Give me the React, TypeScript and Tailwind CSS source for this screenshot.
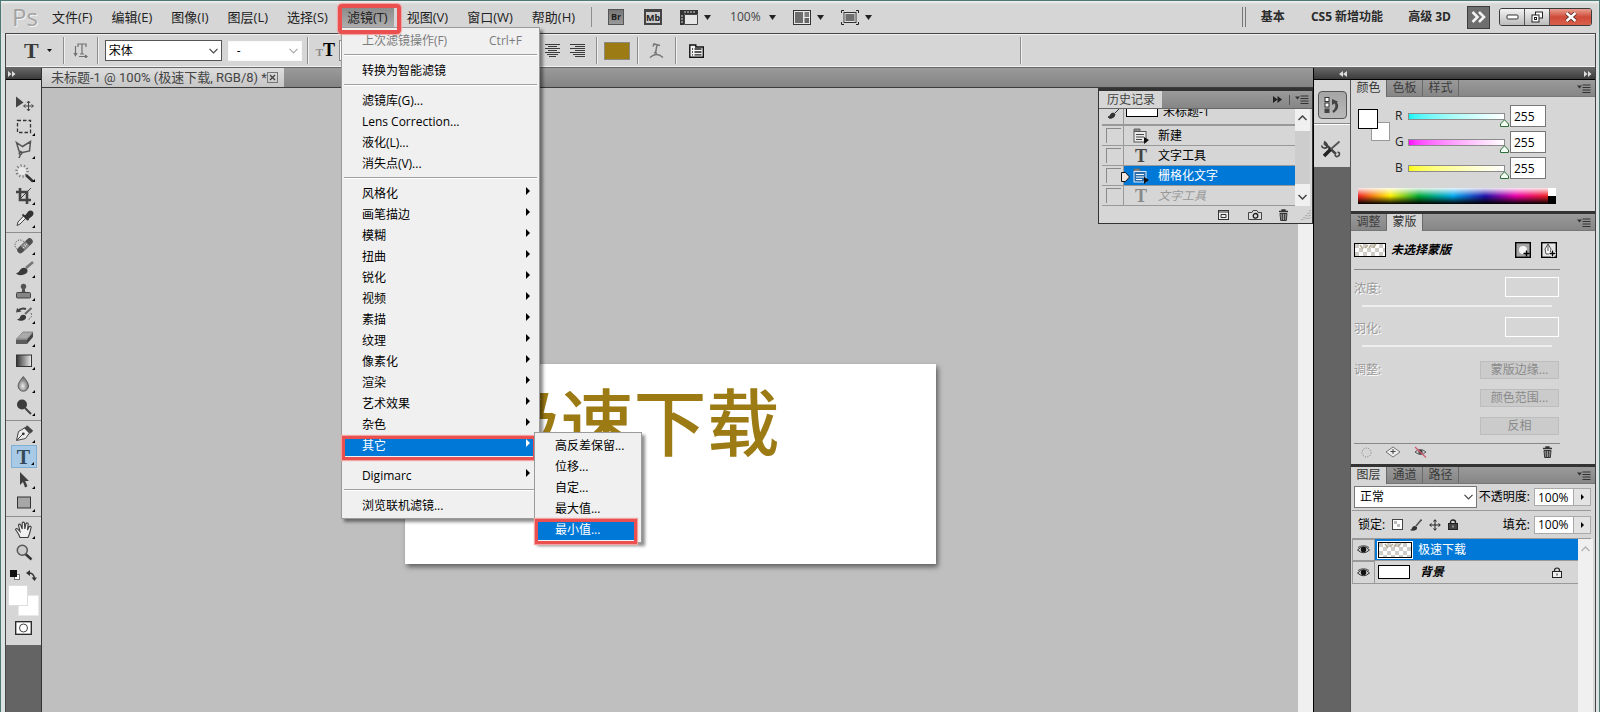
import { ReactNode, useState } from 'react';

const FONT = "font-['Open_Sans','Noto_Sans_CJK_SC',sans-serif]";

const MENUS_BEFORE = ['文件(F)', '编辑(E)', '图像(I)', '图层(L)', '选择(S)'];
const MENUS_AFTER = ['视图(V)', '窗口(W)', '帮助(H)'];

type Entry = { label?: string; shortcut?: string; disabled?: boolean; sub?: boolean; open?: boolean };

const FILTER_MENU: Entry[] = [
  { label: '上次滤镜操作(F)', shortcut: 'Ctrl+F', disabled: true },
  {},
  { label: '转换为智能滤镜' },
  {},
  { label: '滤镜库(G)...' },
  { label: 'Lens Correction...' },
  { label: '液化(L)...' },
  { label: '消失点(V)...' },
  {},
  { label: '风格化', sub: true },
  { label: '画笔描边', sub: true },
  { label: '模糊', sub: true },
  { label: '扭曲', sub: true },
  { label: '锐化', sub: true },
  { label: '视频', sub: true },
  { label: '素描', sub: true },
  { label: '纹理', sub: true },
  { label: '像素化', sub: true },
  { label: '渲染', sub: true },
  { label: '艺术效果', sub: true },
  { label: '杂色', sub: true },
  { label: '其它', sub: true, open: true },
  {},
  { label: 'Digimarc', sub: true },
  {},
  { label: '浏览联机滤镜...' }
];

const OTHER_MENU = ['高反差保留...', '位移...', '自定...', '最大值...', '最小值...'];

function Svg({ w, h, className, children }: { w: number; h: number; className?: string; children: ReactNode }) {
  return (
    <svg width={w} height={h} viewBox={`0 0 ${w} ${h}`} fill="none" className={className ?? 'shrink-0'} aria-hidden="true">
      {children}
    </svg>
  );
}

function DownArrow() {
  return (
    <Svg w={7} h={5}>
      <path d="M0 0h7L3.5 5z" fill="#222" />
    </Svg>
  );
}

function Chevron({ color = '#444' }: { color?: string }) {
  return (
    <Svg w={9} h={6} className="pointer-events-none absolute top-1/2 right-1 -translate-y-1/2">
      <path d="M.5.8l4 4 4-4" stroke={color} strokeWidth="1.2" />
    </Svg>
  );
}

function Grip({ className }: { className: string }) {
  return <span className={`block bg-[radial-gradient(#8a8a8a_35%,transparent_40%)] bg-[length:2px_2px] ${className}`} />;
}

function Separator() {
  return <span className="h-[27px] w-px shrink-0 bg-[#8e8e8e] shadow-[1px_0_#efefef]" />;
}

/* ---------- menu bar ---------- */

function FilterMenu() {
  return (
    <ul className="absolute top-[19px] left-0 z-30 w-[199px] border border-[#9b9b9b] bg-[#f0f0f0] py-0.5 text-xs text-black shadow-[3px_3px_3px_rgba(0,0,0,0.45)]">
      {FILTER_MENU.map((item, index) =>
        item.label ? (
          <li key={item.label} className="relative mx-0.5">
            <button
              type="button"
              disabled={item.disabled}
              className={`flex h-[21px] w-full items-center pt-0.5 pr-[15px] pl-[18px] text-left ${
                item.open ? 'bg-[#0078d7] text-white' : item.disabled ? 'text-[#7c7c7c]' : ''
              }`}
            >
              <span className="flex-1">{item.label}</span>
              {item.shortcut && <span>{item.shortcut}</span>}
              {item.sub && (
                <Svg w={4} h={8} className="-mt-1.5 -mr-2">
                  <path d="M0 0l4 4-4 4z" fill={item.open ? '#fff' : '#000'} />
                </Svg>
              )}
            </button>
            {item.open && (
              <>
                <span className="pointer-events-none absolute top-px -left-0.5 h-6 w-[194px] border-[3px] border-[#e9504f] shadow-[0_0_1px_1px_#f2a3a1]" />
                <OtherMenu />
              </>
            )}
          </li>
        ) : (
          <li key={index} role="separator" className="mx-0.5 h-[9px] pt-[3px]">
            <div className="h-px bg-[#a0a0a0] shadow-[0_1px_#fff]" />
          </li>
        )
      )}
    </ul>
  );
}

function OtherMenu() {
  return (
    <ul className="absolute -top-[3px] left-[190px] z-10 w-[108px] border border-[#9b9b9b] bg-[#f0f0f0] py-0.5 pr-1 pl-0.5 text-black shadow-[3px_3px_3px_rgba(0,0,0,0.45)]">
      {OTHER_MENU.map((label, index) => {
        const active = index === OTHER_MENU.length - 1;
        return (
          <li key={label} className="relative">
            <button
              type="button"
              className={`flex h-[21px] w-full items-center pt-0.5 pl-[18px] whitespace-nowrap ${active ? 'bg-[#0078d7] text-white' : ''}`}
            >
              {label}
            </button>
            {active && (
              <span className="pointer-events-none absolute top-0 -left-0.5 h-[25px] w-[102px] border-[3px] border-[#e9504f] shadow-[0_0_1px_1px_#f2a3a1]" />
            )}
          </li>
        );
      })}
    </ul>
  );
}

function MenuBar() {
  const item = 'h-[19px] px-1.5';
  return (
    <header className="flex h-8 shrink-0 items-center bg-[#d6d6d6] shadow-[inset_0_2px_2px_#efefef]">
      <span className="w-[45px] pl-[11px] font-['Open_Sans'] text-2xl leading-6 text-[#a3a3a3] [text-shadow:1px_1px_#f5f5f5]">Ps</span>
      <nav className="flex items-center gap-[7px] text-[13px] leading-[19px] text-[#222]">
        {MENUS_BEFORE.map((label) => (
          <button key={label} type="button" className={item}>{label}</button>
        ))}
        <div className="relative">
          <button type="button" className={`${item} bg-linear-to-b from-[#8c8c8c] to-[#adadad]`}>滤镜(T)</button>
          <FilterMenu />
          <span className="pointer-events-none absolute -top-1 -left-[3px] z-40 h-[30px] w-[63px] rounded-sm border-4 border-[#e9504f] shadow-[0_0_1px_1px_#f2a3a1]" />
        </div>
        {MENUS_AFTER.map((label) => (
          <button key={label} type="button" className={item}>{label}</button>
        ))}
      </nav>
      <span className="ml-2.5 h-5 w-px bg-[#8e8e8e]" />
      <div className="ml-4 flex items-center text-xs text-[#444]">
        <button type="button" aria-label="Bridge" className="h-4 w-4 border border-[#555] bg-linear-to-b from-[#777] to-[#999] text-center text-[9px] leading-[14px] font-bold text-[#1d1d1d]">Br</button>
        <button type="button" aria-label="Mini Bridge" className="ml-5 h-4 w-[18px] border-2 border-t-[3px] border-[#444] bg-[#ccc] text-center text-[9px] leading-[11px] font-bold text-[#222]">Mb</button>
        <button type="button" aria-label="显示额外内容" className="ml-[18px] flex items-center gap-1.5">
          <Svg w={18} h={15}>
            <rect width="18" height="4" fill="#333" />
            <rect width="4" height="15" fill="#333" />
            <path d="M5 1v2M8 1v2M11 1v2M14 1v2M1 6h2M1 9h2M1 12h2" stroke="#ddd" />
            <path d="M4.500 4.500h13v10h-13z" fill="#e6e6e6" stroke="#444" />
          </Svg>
          <DownArrow />
        </button>
        <button type="button" className="ml-[19px] flex items-center gap-2">100%<DownArrow /></button>
        <button type="button" aria-label="排列文档" className="ml-[17px] flex items-center gap-1.5">
          <Svg w={18} h={15}>
            <rect x=".5" y=".5" width="17" height="14" fill="#e8e8e8" stroke="#333" />
            <rect x="2" y="2" width="8" height="11" fill="#6d6d6d" />
            <rect x="11.500" y="2" width="4.500" height="5" fill="#7d7d7d" />
            <rect x="11.500" y="8" width="4.500" height="5" fill="#666" />
          </Svg>
          <DownArrow />
        </button>
        <button type="button" aria-label="屏幕模式" className="ml-[17px] flex items-center gap-1.5">
          <Svg w={18} h={15}>
            <path d="M.5 3V.5H3M15 .5h2.500V3M.5 12v2.500H3M15 14.500h2.500V12" stroke="#222" />
            <rect x="3" y="2.500" width="12" height="10" fill="#6f6f6f" stroke="#333" />
            <rect x="4" y="3.500" width="10" height="8" stroke="#ddd" />
          </Svg>
          <DownArrow />
        </button>
      </div>
      <div className="ml-auto flex items-center text-xs font-bold text-[#2a2a2a]">
        <span className="mr-[15px] h-5 w-1 border-x border-[#777]" />
        <button type="button" className="mr-[26px]">基本</button>
        <button type="button" className="mr-[25px]">CS5 新增功能</button>
        <button type="button">高级 3D</button>
        <button type="button" aria-label="更多工作区" className="mr-[9px] ml-4 flex h-[23px] w-[23px] items-center justify-center border border-[#3c3c3c] bg-[#6e6e6e]">
          <Svg w={15} h={12}>
            <path d="M1.500 1l5 5-5 5M8 1l5 5-5 5" stroke="#f3f3f3" strokeWidth="2.600" />
          </Svg>
        </button>
        <div className="mr-[7px] flex h-[18px] overflow-hidden rounded-[3px] border border-[#3b3b3b]">
          <button type="button" aria-label="最小化" className="flex w-[25px] items-center justify-center border-r border-[#555] bg-linear-to-b from-[#f3f3f3] to-[#bcbcbc]">
            <Svg w={13} h={6}><rect x="1" y="1" width="11" height="4" rx="1" fill="#fff" stroke="#333" /></Svg>
          </button>
          <button type="button" aria-label="还原" className="flex w-[25px] items-center justify-center border-r border-[#555] bg-linear-to-b from-[#f3f3f3] to-[#bcbcbc]">
            <Svg w={13} h={12}>
              <rect x="4.500" y="1" width="7" height="6" fill="#fff" stroke="#222" />
              <rect x="1" y="4" width="7" height="7" fill="#fff" stroke="#222" />
              <rect x="3.500" y="6.500" width="2" height="2" stroke="#222" />
            </Svg>
          </button>
          <button type="button" aria-label="关闭" className="flex w-[41px] items-center justify-center bg-linear-to-b from-[#e79d90] via-[#cf4a38] via-50% to-[#d9604c]">
            <Svg w={12} h={10}>
              <path d="M1.500 1l9 8M10.500 1l-9 8" stroke="#4a2620" strokeWidth="4" />
              <path d="M1.500 1l9 8M10.500 1l-9 8" stroke="#fff" strokeWidth="2.400" />
            </Svg>
          </button>
        </div>
      </div>
    </header>
  );
}

/* ---------- options bar ---------- */

function OptionsBar() {
  return (
    <section className="flex h-[35px] shrink-0 items-center border-y border-t-[#444] border-b-[#666] bg-[#d6d6d6] text-xs shadow-[inset_0_1px_#f2f2f2,inset_0_-1px_#f2f2f2]">
      <Grip className="ml-[3px] h-6 w-1" />
      <button type="button" aria-label="横排文字工具" className="ml-[11px] flex items-center gap-2">
        <span className="font-['Liberation_Serif'] text-[22px] leading-6 font-bold text-[#3a3a3a]">T</span>
        <Svg w={5} h={3}><path d="M0 0h5L2.500 3z" fill="#111" /></Svg>
      </button>
      <span className="w-[11px]" />
      <Separator />
      <button type="button" aria-label="切换文本取向" className="mx-[9px]">
        <Svg w={15} h={15}>
          <path d="M5 4V1h8v3M9 1v10M7 11h4M2.500 3v9M1 10l1.500 2.500L4 10M6 13.500h7M12 12l2 1.500-2 1.500" stroke="#707070" strokeWidth="1.200" />
        </Svg>
      </button>
      <Separator />
      <label className="relative ml-[7px]">
        <select aria-label="字体" className="h-[21px] w-[117px] appearance-none border border-[#555] bg-white pl-[3px] text-black">
          <option>宋体</option>
        </select>
        <Chevron />
      </label>
      <label className="relative ml-1.5">
        <select aria-label="字体样式" className="h-5 w-[74px] appearance-none border border-[#f8f8f8] bg-white pl-2 text-black">
          <option>-</option>
        </select>
        <Chevron color="#aaa" />
      </label>
      <span className="w-[5px]" />
      <Separator />
      <span className="ml-2 flex items-baseline font-['Liberation_Serif'] leading-6 font-bold">
        <span className="text-[11px] text-[#888]">T</span>
        <span className="text-lg leading-6 text-black">T</span>
      </span>
      <label className="relative ml-1">
        <select aria-label="字体大小" className="h-[21px] w-[80px] appearance-none border border-[#888] bg-white pl-1 text-black">
          <option>72 点</option>
        </select>
        <Chevron />
      </label>
      <label className="relative ml-2">
        <select aria-label="消除锯齿" className="h-[21px] w-[72px] appearance-none border border-[#888] bg-white pl-1 text-black">
          <option>锐利</option>
        </select>
        <Chevron />
      </label>
      <div className="ml-[21px] flex gap-2.5">
        <button type="button" aria-label="左对齐文本" className="w-[15px]">
          <Svg w={15} h={15}><path d="M0 1.500h15M0 3.500h10M0 5.500h15M0 7.500h10M0 9.500h15M0 11.500h12M0 13.500h10" stroke="#3c3c3c" /></Svg>
        </button>
        <button type="button" aria-label="居中对齐文本" className="w-[15px]">
          <Svg w={15} h={15}><path d="M0 1.500h15M3 3.500h9M0 5.500h15M3 7.500h9M0 9.500h15M2 11.500h11M4 13.500h7" stroke="#3c3c3c" /></Svg>
        </button>
        <button type="button" aria-label="右对齐文本" className="w-[15px]">
          <Svg w={15} h={15}><path d="M0 1.500h15M5 3.500h10M0 5.500h15M5 7.500h10M0 9.500h15M3 11.500h12M5 13.500h10" stroke="#3c3c3c" /></Svg>
        </button>
      </div>
      <span className="w-[11px]" />
      <Separator />
      <button type="button" aria-label="文本颜色" className="mx-[7px] h-[18px] w-[26px] border border-[#8d8a80] bg-[#9c7a14]" />
      <Separator />
      <button type="button" aria-label="变形文字" className="mx-[11px]">
        <Svg w={15} h={15}>
          <path d="M4 3.500L5 1l6 1.500M8 2l-1.500 8M5 9.500l3 1" stroke="#777" strokeWidth="1.500" />
          <path d="M1 14.500q6.500-6 13 0" stroke="#777" strokeWidth="1.300" />
        </Svg>
      </button>
      <Separator />
      <button type="button" aria-label="字符和段落面板" className="ml-[13px]">
        <Svg w={15} h={14}>
          <path d="M.8 1h6v2h7.500v10.200H.8z" fill="#f4f4f4" stroke="#111" strokeWidth="1.400" />
          <path d="M3 5h1M3 8h1M3 10.800h1M5.500 5h7M5.500 8h7M5.500 10.800h7" stroke="#222" strokeWidth="1.300" />
        </Svg>
      </button>
      <span className="w-[316px]" />
      <Separator />
    </section>
  );
}

/* ---------- toolbox ---------- */

const D = '#444';

const TOOL_GROUPS: { name: string; corner: boolean; art: ReactNode }[][] = [
  [
    {
      name: '移动工具', corner: false,
      art: (
        <>
          <path d="M2 2.500v11l7.500-5z" fill={D} />
          <path d="M14.500 7.500v9M10 12h9M13 9l1.500-2L16 9M13 15l1.500 2 1.500-2M11.500 10.500l-2 1.500 2 1.500M17.500 10.500l2 1.500-2 1.500" stroke={D} />
        </>
      )
    },
    { name: '矩形选框工具', corner: true, art: <rect x="3.500" y="3.500" width="13" height="12" stroke="#333" strokeWidth="1.300" strokeDasharray="3.500 2" /> },
    {
      name: '多边形套索工具', corner: true,
      art: <path d="M2.500 2.500l6 4 8-5-1 9.500-7 1.500L5 11zM7 12c-2 0-2.500 2-.8 2.300s2.300-1.800.8-2.300M6.500 14.500L5 18" stroke="#555" strokeWidth="1.500" />
    },
    {
      name: '魔棒工具', corner: true,
      art: (
        <>
          <circle cx="8" cy="8" r="4" fill="#e8e8e8" />
          <circle cx="8" cy="8" r="5.500" stroke="#777" strokeWidth="2.500" strokeDasharray="1.100 2.300" />
          <path d="M12 12l7 6.500" stroke="#333" strokeWidth="2.600" />
        </>
      )
    },
    {
      name: '裁剪工具', corner: true,
      art: (
        <>
          <path d="M6 2v12h11M2 6h11v12" stroke={D} strokeWidth="2.600" />
          <path d="M6 13L17 2" stroke={D} />
        </>
      )
    },
    {
      name: '吸管工具', corner: true,
      art: (
        <>
          <path d="M10 6.500L4 13l-1 3.500 3-1.500 6-6" fill="#eee" stroke="#444" />
          <path d="M8.500 5.500l6 5.500M11 8l3.500-4.500q2-2 3.500-.5t-.5 3.500L13 10z" fill="#333" stroke="#333" strokeWidth="1.800" />
        </>
      )
    }
  ],
  [
    {
      name: '污点修复画笔工具', corner: true,
      art: (
        <>
          <circle cx="6" cy="9" r="5" stroke="#333" strokeDasharray="1 1.600" />
          <path d="M6.500 14l9-8.500" stroke="#505050" strokeWidth="6.500" strokeLinecap="round" />
          <path d="M8.500 12l5-4.500" stroke="#8c8c8c" strokeWidth="5.500" />
          <path d="M9 11.500h1M11 10h1M12 8.500h1M10 9h1" stroke="#ddd" />
        </>
      )
    },
    {
      name: '画笔工具', corner: true,
      art: (
        <>
          <path d="M12 9l7-6" stroke="#777" strokeWidth="2.600" />
          <path d="M2 14.500q3-.5 4-3.500 3-4 7-1 2 3.500-3 5.500t-8-1z" fill="#3a3a3a" />
        </>
      )
    },
    {
      name: '仿制图章工具', corner: true,
      art: (
        <>
          <circle cx="9.500" cy="4.500" r="2.700" fill="#555" />
          <path d="M8.300 6h2.400l.8 5h-4z" fill="#555" />
          <rect x="2.500" y="10.500" width="14" height="5.500" rx="1" fill="#848484" stroke="#444" />
        </>
      )
    },
    {
      name: '历史记录画笔工具', corner: true,
      art: (
        <>
          <path d="M11 9l6.500-6" stroke="#666" strokeWidth="2" />
          <path d="M3 14.500q3-.5 3.500-3.500 2.500-2.500 5.500 0 .5 3.500-3 4.500t-6-1z" fill="#3a3a3a" />
          <path d="M4 6q3-3.500 8-2" stroke={D} strokeWidth="2" />
          <path d="M2 7.500l1-4.500 4.500 3.500z" fill={D} />
          <path d="M17 8q2 5-4 7" stroke="#555" strokeDasharray="1.500 1.500" />
        </>
      )
    },
    {
      name: '橡皮擦工具', corner: true,
      art: (
        <>
          <path d="M2.500 11L9 4h10l-6 7z" fill="#aaa" stroke="#666" strokeWidth=".6" />
          <path d="M2 11.500h11V16H2z" fill="#5c5c5c" />
          <path d="M13 11.500L19 4.500V9l-6 7z" fill="#444" />
        </>
      )
    },
    {
      name: '渐变工具', corner: true,
      art: (
        <>
          <defs><linearGradient id="tool-grad"><stop stopColor="#333" /><stop offset="1" stopColor="#eee" /></linearGradient></defs>
          <rect x="2.500" y="4" width="15" height="11.500" fill="url(#tool-grad)" stroke="#333" />
        </>
      )
    },
    {
      name: '模糊工具', corner: true,
      art: (
        <>
          <defs><radialGradient id="tool-drop" cx=".45" cy=".65"><stop stopColor="#eaeaea" /><stop offset="1" stopColor="#777" /></radialGradient></defs>
          <path d="M9.300 2.500q5.200 6 5.200 9.500a5.200 5.200 0 01-10.400 0q0-3.500 5.200-9.500z" fill="url(#tool-drop)" stroke="#555" strokeWidth=".9" />
        </>
      )
    },
    {
      name: '减淡工具', corner: true,
      art: (
        <>
          <path d="M11 11l6 6" stroke={D} strokeWidth="2" />
          <circle cx="8" cy="7.500" r="5" fill="#3c3c3c" />
        </>
      )
    }
  ],
  [
    {
      name: '钢笔工具', corner: true,
      art: (
        <>
          <path d="M2.500 16.500l2-9 6-3.500 5 5-4 5.500z" fill="#ededed" stroke="#444" />
          <path d="M10.500 3.500l5.500 6" stroke="#333" strokeWidth="1" />
          <path d="M12 2.500l6 5.500" stroke="#444" strokeWidth="3.400" />
          <path d="M3 16l6-6" stroke="#444" />
          <circle cx="9.300" cy="9.800" r="1.400" fill="#333" />
        </>
      )
    },
    { name: '横排文字工具', corner: true, art: null },
    { name: '路径选择工具', corner: true, art: <path d="M6 2v13l3-3 2 5.500 2.500-1.200-2.300-5.300H15z" fill="#404040" /> },
    { name: '矩形工具', corner: true, art: <rect x="3.500" y="4" width="13" height="11" fill="#a6a6a6" stroke="#333" /> }
  ],
  [
    {
      name: '抓手工具', corner: true,
      art: (
        <path
          d="M6 17.500L4.500 14 1.500 9.500q.7-1.800 2.300-.3L6 11.500 4.500 5q1-1.700 2.200 0l1.500 4V3q1.200-1.700 2.300 0l.3 6 1.200-5.500q1.500-1.300 2.200.3L13.500 10l1.700-3.500q1.600-.9 2 .6l-1.600 6.400-1.600 4z"
          fill="#f0f0f0" stroke="#3c3c3c" strokeWidth="1.100"
        />
      )
    },
    {
      name: '缩放工具', corner: false,
      art: (
        <>
          <path d="M11.500 11l6 5.500" stroke="#333" strokeWidth="2.400" />
          <circle cx="8.300" cy="7.300" r="5" fill="#ccc" stroke="#555" strokeWidth="1.500" />
        </>
      )
    }
  ]
];

function Toolbox() {
  return (
    <aside className="flex w-9 shrink-0 flex-col border-r border-[#333] bg-[#646464]">
      <div className="flex h-3 shrink-0 items-center border-b border-black bg-linear-to-b from-[#666] to-[#3c3c3c] pl-0.5">
        <Svg w={8} h={6}><path d="M0 0l3.500 3L0 6zM4 0l3.500 3L4 6z" fill="#ddd" /></Svg>
      </div>
      <div className="bg-[#d6d6d6] pt-1 pb-2.5">
        <Grip className="mx-1 mb-[5px] h-[3px]" />
        {TOOL_GROUPS.map((group, index) => (
          <div key={index} className={index ? 'mt-[2px] border-t border-[#8e8e8e] pt-px' : ''}>
            {group.map((tool) => (
              <button
                key={tool.name}
                type="button"
                aria-label={tool.name}
                className={`relative mx-auto flex h-[23px] w-[26px] items-center justify-center ${tool.art ? '' : 'border border-[#7fb0d4] bg-[#a9cae6]'}`}
              >
                {tool.art ? (
                  <Svg w={20} h={20}>{tool.art}</Svg>
                ) : (
                  <span className="font-['Liberation_Serif'] text-xl leading-5 font-bold text-[#34495a]">T</span>
                )}
                {tool.corner && (
                  <Svg w={3} h={3} className="absolute right-0.5 bottom-0.5"><path d="M3 0v3H0z" fill="#000" /></Svg>
                )}
              </button>
            ))}
          </div>
        ))}
        <div className="mt-1 flex h-[15px] items-center justify-between px-1">
          <Svg w={11} h={11}>
            <rect x="4.500" y="4.500" width="5" height="5" fill="#fff" stroke="#777" />
            <rect width="7" height="7" fill="#111" />
          </Svg>
          <Svg w={11} h={11}>
            <path d="M2 3q6-.5 6.500 6" stroke="#333" strokeWidth="1.500" />
            <path d="M0 3l4-3v6zM5.500 7.500h5.500L8.500 11z" fill="#333" />
          </Svg>
        </div>
        <div className="grid h-[33px] grid-cols-[10px_10px_11px] grid-rows-[10px_11px_10px] pt-0.5 pl-0.5">
          <button type="button" aria-label="背景色" className="col-start-2 col-end-4 row-start-2 row-end-4 border border-[#e8e8e8] bg-white" />
          <button type="button" aria-label="前景色" className="col-start-1 col-end-3 row-start-1 row-end-3 border border-[#ddd] bg-white" />
        </div>
        <button type="button" aria-label="以快速蒙版模式编辑" className="mx-auto mt-[5px] block h-[14px] w-[17px]">
          <Svg w={17} h={14}>
            <rect x=".7" y=".7" width="15.600" height="12.600" fill="#fff" stroke="#222" strokeWidth="1.300" />
            <circle cx="8.500" cy="7" r="4" stroke="#444" />
          </Svg>
        </button>
      </div>
    </aside>
  );
}

/* ---------- document ---------- */

function Workspace() {
  return (
    <main className="relative flex min-w-0 flex-1 flex-col bg-[#bfbfbf]">
      <div className="flex h-5 shrink-0 border-b border-[#3c3c3c] bg-linear-to-b from-[#9a9a9a] to-[#848484]">
        <div className="flex w-[242px] items-center bg-linear-to-b from-[#dedede] to-[#c6c6c6] pl-[9px] font-['Roboto','Noto_Sans_CJK_SC',sans-serif] text-[13px] leading-[18px] whitespace-nowrap text-[#444]">
          未标题-1 @ 100% (极速下载, RGB/8) *
          <button type="button" aria-label="关闭文档" className="mr-1.5 ml-auto">
            <Svg w={11} h={11}>
              <rect x=".5" y=".5" width="10" height="10" stroke="#777" />
              <path d="M3 3l5 5M8 3L3 8" stroke="#444" strokeWidth="1.400" />
            </Svg>
          </button>
        </div>
      </div>
      <div className="flex min-h-0 flex-1">
        <div className="flex flex-1 items-start justify-center pt-[276px]">
          <div className="h-[200px] w-[531px] bg-white pt-2 pl-[83px] font-['Noto_Sans_CJK_SC',sans-serif] text-[73px] leading-[92px] font-medium whitespace-nowrap text-[#9c7a14] shadow-[2px_3px_5px_rgba(0,0,0,0.5)]">
            极速下载
          </div>
        </div>
        <div className="w-[15px] bg-[#f0f0f0]" />
      </div>
      <HistoryPanel />
    </main>
  );
}

function StepIcon({ light }: { light?: boolean }) {
  const line = light ? '#fff' : '#444';
  return (
    <Svg w={16} h={16}>
      <path d="M1 3V1h6v2" fill="#888" stroke="#666" />
      <rect x="1" y="3.500" width="12" height="10.500" fill={light ? '#2c6dac' : '#ececec'} stroke={light ? '#d8e8f8' : '#555'} />
      <path d="M3 6.500h8M3 9h8M3 11.500h6" stroke={line} />
      <path d="M11 9v7l5-4z" fill="#111" />
    </Svg>
  );
}

const STEPS = [
  { label: '新建', type: 'menu' },
  { label: '文字工具', type: 'text' },
  { label: '栅格化文字', type: 'menu', active: true },
  { label: '文字工具', type: 'text', undone: true }
];

function TrashIcon() {
  return (
    <Svg w={11} h={12}>
      <path d="M1 2.500h9M4 2V1h3v1" stroke="#333" strokeWidth="1.300" />
      <path d="M2 4.500h7l-.7 7H2.700z" fill="#999" stroke="#333" />
      <path d="M4.300 5v6M6.700 5v6" stroke="#333" />
    </Svg>
  );
}

function PanelMenuIcon() {
  return (
    <Svg w={14} h={9}>
      <path d="M0 1.500h5L2.500 4.500z" fill="#333" />
      <path d="M5.500 1h8M5.500 3.500h8M5.500 6h8M5.500 8.500h8" stroke="#333" />
    </Svg>
  );
}

function HistoryPanel() {
  return (
    <section className="absolute top-5 right-0 w-[215px] border border-t-[3px] border-[#333] bg-[#d6d6d6] text-xs text-black">
      <div className="flex h-[18px] items-center border-b border-[#666] bg-linear-to-b from-[#9a9a9a] to-[#868686]">
        <h2 className="h-full w-[63px] bg-[#d6d6d6] pl-2 leading-[17px] text-[#444]">历史记录</h2>
        <span className="flex-1" />
        <Svg w={9} h={7}><path d="M0 0l4.500 3.500L0 7zM4.500 0L9 3.500 4.500 7z" fill="#222" /></Svg>
        <span className="mr-[5px] ml-[7px] h-2.5 w-px bg-[#555]" />
        <PanelMenuIcon />
        <span className="w-[3px]" />
      </div>
      <div className="flex pr-0.5">
        <div className="min-w-0 flex-1 pl-[3px]">
          <div className="flex h-[17px] items-end overflow-hidden border-b-2 border-[#999]">
            <span className="flex h-5 w-[22px] items-center justify-center border-r border-[#999]">
              <Svg w={14} h={14}>
                <path d="M2 10q2 0 3-3 2-2 4 0 0 3-3 4t-4-1zM9 6l5-5" fill="#333" stroke="#333" />
              </Svg>
            </span>
            <span className="mb-[7px] ml-0.5 h-5 w-8 border border-black bg-white" />
            <span className="ml-[5px] h-5 leading-4">未标题-1</span>
          </div>
          <ul>
            {STEPS.map((step, index) => (
              <li key={index} className="flex h-5 border-b border-[#999]">
                <span className="flex w-[22px] shrink-0 border-r border-[#999] pl-1">
                  <span className="mt-0.5 h-[15px] w-[15px] border-t border-l border-[#8a8a8a]" />
                </span>
                <button
                  type="button"
                  className={`relative flex flex-1 items-center pl-[9px] ${step.active ? 'bg-[#0078d7] text-white' : step.undone ? 'text-[#999]' : ''}`}
                >
                  {step.active && (
                    <Svg w={9} h={10} className="absolute top-1.5 -left-[3px]">
                      <path d="M.5.500h4l4 4.500-4 4.500h-4z" fill="#f4e6e0" stroke="#111" />
                    </Svg>
                  )}
                  <span className="flex w-[25px]">
                    {step.type === 'menu' ? (
                      <StepIcon light={step.active} />
                    ) : (
                      <span className={`pl-0.5 font-['Liberation_Serif'] text-lg leading-4 font-bold ${step.undone ? 'text-[#888]' : 'text-[#444]'}`}>T</span>
                    )}
                  </span>
                  <span className={step.undone ? 'italic' : ''}>{step.label}</span>
                </button>
              </li>
            ))}
          </ul>
        </div>
        <div className="flex w-[15px] flex-col items-center justify-between bg-[#f0f0f0] py-1.5">
          <Svg w={9} h={6}><path d="M.5 5l4-4 4 4" stroke="#444" strokeWidth="1.500" /></Svg>
          <span className="my-2.5 w-full flex-1 bg-[#cdcdcd]" />
          <Svg w={9} h={6}><path d="M.5 1l4 4 4-4" stroke="#444" strokeWidth="1.500" /></Svg>
        </div>
      </div>
      <div className="flex h-[17px] items-center justify-end pr-px">
        <button type="button" aria-label="从当前状态创建新文档" className="mr-[19px]">
          <Svg w={11} h={10}>
            <rect x=".5" y=".5" width="10" height="9" fill="#eee" stroke="#333" />
            <path d="M0 2h11M3 4.500h5v3H3z" stroke="#333" />
          </Svg>
        </button>
        <button type="button" aria-label="创建新快照" className="mr-4">
          <Svg w={14} h={10}>
            <path d="M.5 2.500H4L5 .5h4l1 2h3.500v7H.5z" fill="#ddd" stroke="#444" />
            <circle cx="7.500" cy="5.800" r="2.300" stroke="#222" strokeWidth="1.300" />
          </Svg>
        </button>
        <button type="button" aria-label="删除当前状态" className="mr-3"><TrashIcon /></button>
        <Svg w={10} h={10}><path d="M9 0v10M7 3v7M5 5v5M3 7v3M1 9v1" stroke="#888" strokeDasharray="1 1.500" /></Svg>
      </div>
    </section>
  );
}

/* ---------- right side ---------- */

function Dock() {
  return (
    <aside className="w-9 shrink-0">
      <div className="border-b border-[#888] bg-[#d6d6d6] pt-1 pb-1">
        <Grip className="mx-1 mb-1 h-[3px]" />
        <button type="button" aria-label="历史记录" className="mx-auto flex h-7 w-[29px] items-center justify-center rounded-sm border border-[#555] bg-linear-to-b from-[#a5a5a5] to-[#b9b9b9]">
          <Svg w={18} h={18}>
            <rect x="2" y="1.500" width="4" height="4" fill="#fff" stroke="#333" />
            <rect x="2" y="7" width="4" height="4" fill="#fff" stroke="#333" />
            <rect x="1.500" y="12.500" width="5" height="4.500" fill="#444" />
            <path d="M10 16q6-4 2.500-10" stroke="#444" strokeWidth="2.600" />
            <path d="M9 3v6l6-3.500z" fill="#444" />
          </Svg>
        </button>
      </div>
      <div className="border-t border-white bg-[#d6d6d6] pt-1 pb-[9px]">
        <Grip className="mx-1 mb-2 h-[3px]" />
        <button type="button" aria-label="工具预设" className="mx-auto flex w-[22px]">
          <Svg w={20} h={18}>
            <path d="M3 3l12 11" stroke="#444" strokeWidth="2.400" />
            <path d="M1 5.500q-.5 2 2 2.500t3-1.500-.5-3T3 1.500" stroke="#444" strokeWidth="1.600" />
            <path d="M14 14.500q.5 2.500 2.500 2t2-2.500-2-1.700" stroke="#444" strokeWidth="1.600" />
            <path d="M18.500 1.500L10 9" stroke="#555" strokeWidth="1.800" />
            <path d="M9.500 9.500L3 16" stroke="#222" strokeWidth="3.600" />
          </Svg>
        </button>
      </div>
    </aside>
  );
}

function Tabs({ labels, active }: { labels: string[]; active: number }) {
  return (
    <div role="tablist" className="flex h-[17px] items-center border-b border-[#777] bg-linear-to-b from-[#9a9a9a] to-[#868686] text-xs leading-4 text-[#3c3c3c]">
      {labels.map((label, index) => (
        <button
          key={label}
          type="button"
          role="tab"
          aria-selected={index === active}
          className={`w-9 border-r border-[#6a6a6a] ${index === active ? 'h-[17px] bg-[#d6d6d6] text-[#333]' : 'h-4'}`}
        >
          {label}
        </button>
      ))}
      <span className="mr-1 ml-auto"><PanelMenuIcon /></span>
    </div>
  );
}

const CHANNELS = [
  { name: 'R', track: 'bg-linear-to-r from-[#00f6f6] to-white' },
  { name: 'G', track: 'bg-linear-to-r from-[#ff00ff] to-white' },
  { name: 'B', track: 'bg-linear-to-r from-[#ffff00] to-white' }
];

function ColorPanel() {
  const [rgb, setRgb] = useState([255, 255, 255]);
  const change = (index: number, value: number) => setRgb(rgb.map((old, i) => (i === index ? value : old)));

  return (
    <section className="border-b-[3px] border-[#333] bg-[#d6d6d6] text-[#222]">
      <Tabs labels={['颜色', '色板', '样式']} active={0} />
      <div className="flex px-[7px] pt-2">
        <div className="mt-1 grid h-8 w-8 grid-cols-[13px_7px_12px] grid-rows-[13px_7px_12px]">
          <button type="button" aria-label="背景色" className="col-start-2 col-end-4 row-start-2 row-end-4 border border-[#999] bg-white" />
          <button type="button" aria-label="前景色" className="col-start-1 col-end-3 row-start-1 row-end-3 border border-black bg-white" />
        </div>
        <div className="ml-[5px] flex flex-col gap-1">
          {CHANNELS.map((channel, index) => (
            <div key={channel.name} className="flex h-[22px] items-center text-xs">
              <label htmlFor={`channel-${channel.name}`} className="w-[13px]">{channel.name}</label>
              <div className={`relative h-[7px] w-[97px] border border-[#8c8c8c] ${channel.track}`}>
                <input
                  type="range"
                  min="0"
                  max="255"
                  aria-label={channel.name}
                  value={rgb[index]}
                  onChange={(event) => change(index, Number(event.target.value))}
                  className="absolute inset-0 w-full opacity-0"
                />
                <span className="pointer-events-none absolute top-[5px] -ml-1" style={{ left: `${(rgb[index] / 255) * 100}%` }}>
                  <Svg w={9} h={8}>
                    <path d="M4.500.800L8.500 5v2.500h-8V5z" fill="#f2fff2" stroke="#2f6e3a" />
                  </Svg>
                </span>
              </div>
              <input
                id={`channel-${channel.name}`}
                value={rgb[index]}
                onChange={(event) => change(index, Number(event.target.value) || 0)}
                className="ml-[5px] h-[22px] w-9 border border-[#777] bg-white pl-[3px] text-black"
              />
            </div>
          ))}
        </div>
      </div>
      <div className="mt-[9px] mb-[7px] ml-[7px] flex h-4 w-[198px]">
        <div className="flex-1 bg-[linear-gradient(to_bottom,rgba(255,255,255,0.9),transparent_50%,#000),linear-gradient(to_right,#e22,#fe0_17%,#0a3_32%,#0ae_50%,#21a_67%,#e0a_83%,#e22)]" />
        <div className="w-2 border-b-8 border-black bg-white" />
      </div>
    </section>
  );
}

function Thumb({ className }: { className: string }) {
  return (
    <span className={`flex bg-[conic-gradient(#fff_25%,#cfcbc6_0_50%,#fff_0_75%,#cfcbc6_0)] bg-[length:8px_8px] ${className}`}>
      <Svg w={24} h={7} className="m-auto -mt-px">
        <path d="M2 2l3 4M7 5l3-3M11 5l2-3M15 5l3-4" stroke="#b5aa92" strokeWidth="1.500" />
      </Svg>
    </span>
  );
}

function MaskPanel() {
  return (
    <section className="border-b-[3px] border-[#333] bg-[#d6d6d6] text-xs text-[#999]">
      <Tabs labels={['调整', '蒙版']} active={1} />
      <div className="ml-[3px] w-[206px] pt-[9px]">
        <div className="flex h-[30px] items-start border-b border-[#888] pt-[2px]">
          <Thumb className="mt-px h-[14px] w-8 border border-black" />
          <span className="ml-[5px] leading-4 font-semibold text-black italic">未选择蒙版</span>
          <button type="button" aria-label="添加像素蒙版" className="ml-auto">
            <Svg w={16} h={16}>
              <rect x=".7" y=".7" width="14.600" height="14.600" fill="#a5a5a5" stroke="#000" strokeWidth="1.400" />
              <circle cx="8" cy="8" r="4" fill="#f6f6f6" />
              <path d="M11.500 8.500v6M8.500 11.500h6" stroke="#000" strokeWidth="1.400" />
            </Svg>
          </button>
          <button type="button" aria-label="添加矢量蒙版" className="mr-[3px] ml-2.5">
            <Svg w={16} h={16}>
              <rect x=".7" y=".7" width="14.600" height="14.600" fill="#e6e6e6" stroke="#000" strokeWidth="1.400" />
              <path d="M7 2l3 5-1 5H5L4 7zM7 2v7" fill="#fff" stroke="#555" />
              <path d="M11.500 8v7M8 11.500h7" stroke="#fff" strokeWidth="3" />
              <path d="M11.500 8.500v6M8.500 11.500h6" stroke="#000" strokeWidth="1.400" />
            </Svg>
          </button>
        </div>
        {['浓度:', '羽化:'].map((label) => (
          <div key={label} className="h-10 pt-[7px]">
            <div className="flex items-center justify-between">
              <label htmlFor={label} className="pt-1 leading-4 [text-shadow:1px_1px_#fff]">{label}</label>
              <input id={label} disabled className="mr-px h-5 w-[54px] border border-white" />
            </div>
            <div className="mx-2 mt-2 h-0.5 bg-[#eee]" />
          </div>
        ))}
        <div className="mt-[11px] flex items-start justify-between border-b border-[#888] pb-2">
          <span className="leading-[18px] [text-shadow:1px_1px_#fff]">调整:</span>
          <div className="mr-px flex w-[79px] flex-col gap-2.5 text-[#8a8a8a]">
            {['蒙版边缘...', '颜色范围...', '反相'].map((label) => (
              <button key={label} type="button" disabled className="h-[18px] border border-[#bdbdbd] bg-[#cbcbcb] leading-4">{label}</button>
            ))}
          </div>
        </div>
        <div className="flex h-5 items-center pb-1 pl-[7px]">
          <Svg w={11} h={11}><circle cx="5.500" cy="5.500" r="4.500" stroke="#777" strokeDasharray="1 1.500" /></Svg>
          <Svg w={16} h={12} className="ml-[13px]">
            <path d="M1 6l7-5 7 5-7 5z" fill="#ececec" stroke="#777" />
            <path d="M8 3v5M5.500 5.500h5" stroke="#444" />
          </Svg>
          <Svg w={13} h={12} className="ml-[13px]">
            <path d="M1 6q5-5 11 0-5 5-11 0z" fill="#ccc" stroke="#555" />
            <circle cx="6.500" cy="6" r="2.200" fill="#444" />
            <path d="M1 1l11 10.500" stroke="#d0576a" strokeWidth="1.200" />
          </Svg>
          <span className="mr-[7px] ml-auto"><TrashIcon /></span>
        </div>
      </div>
    </section>
  );
}

function Percent({ id, label }: { id: string; label: string }) {
  return (
    <div className="ml-auto flex items-center">
      <label htmlFor={id} className="mr-1">{label}</label>
      <input id={id} defaultValue="100%" className="h-[18px] w-10 border border-[#aaa] bg-white pl-[3px]" />
      <button type="button" aria-label={`${label}滑块`} className="flex h-[18px] w-[17px] items-center justify-center border border-l-0 border-[#aaa] bg-[#e3e3e3]">
        <Svg w={3} h={6}><path d="M0 0l3 3-3 3z" fill="#000" /></Svg>
      </button>
    </div>
  );
}

function Eye() {
  return (
    <Svg w={13} h={9}>
      <path d="M.5 5q6-6.500 12 0-6 5.500-12 0z" fill="#ccc" stroke="#333" />
      <circle cx="6.500" cy="4.500" r="2.700" fill="#111" />
      <path d="M1 2.500q5.500-3.500 11 0" stroke="#444" />
    </Svg>
  );
}

function LayersPanel() {
  return (
    <section className="flex min-h-0 flex-1 flex-col bg-[#d6d6d6] text-xs text-black">
      <Tabs labels={['图层', '通道', '路径']} active={0} />
      <div className="mr-1 ml-px flex h-[27px] items-center border-b border-[#999] pl-0.5">
        <div className="relative">
          <select aria-label="混合模式" className="h-[22px] w-[123px] appearance-none border border-[#777] bg-white pl-[5px]">
            <option>正常</option>
          </select>
          <Chevron />
        </div>
        <Percent id="opacity" label="不透明度:" />
      </div>
      <div className="mr-1 ml-px flex h-7 items-center border-b border-[#999] pl-1.5">
        <span>锁定:</span>
        <div className="ml-[7px] flex items-center gap-[7px]">
          <button type="button" aria-label="锁定透明像素">
            <Svg w={11} h={11}>
              <rect x=".5" y=".5" width="10" height="10" fill="#fff" stroke="#444" />
              <path d="M2 2h3v3H2zM5 5h3v3H5z" fill="#bbb" />
            </Svg>
          </button>
          <button type="button" aria-label="锁定图像像素">
            <Svg w={12} h={12}>
              <path d="M6 7l5.500-6.500" stroke="#555" strokeWidth="1.700" />
              <path d="M0 11q2-.5 2.500-3 2-2 4.500 0 .5 3-2.500 3.500T0 11z" fill="#333" />
            </Svg>
          </button>
          <button type="button" aria-label="锁定位置">
            <Svg w={12} h={12}>
              <path d="M6 1v10M1 6h10M4.500 2.500L6 .700l1.500 1.800M4.500 9.500L6 11.300l1.500-1.800M2.500 4.500L.7 6l1.800 1.500M9.500 4.500L11.300 6 9.500 7.500" stroke="#222" />
            </Svg>
          </button>
          <button type="button" aria-label="锁定全部">
            <Svg w={10} h={11}>
              <path d="M2.500 5V3.500q0-2.500 2.500-2.500t2.500 2.500V5" stroke="#222" strokeWidth="1.400" />
              <rect x=".5" y="4.500" width="9" height="6" fill="#444" stroke="#222" />
              <path d="M5 6.500v2" stroke="#ddd" />
            </Svg>
          </button>
        </div>
        <Percent id="fill" label="填充:" />
      </div>
      <div className="flex min-h-0 flex-1 pr-0.5 pl-px">
        <ul className="flex-1">
          <li className="flex h-[22px] border-b border-[#999]">
            <button type="button" aria-label="隐藏极速下载" className="flex w-[23px] items-center justify-center border-r border-[#999] shadow-[inset_3px_3px_0_-2px_#999]"><Eye /></button>
            <button type="button" className="flex flex-1 items-center bg-[#0078d7] pl-[3px] text-white">
              <Thumb className="h-4 w-[34px] border border-black outline outline-white" />
              <span className="ml-1.5">极速下载</span>
            </button>
          </li>
          <li className="flex h-[23px] border-b border-[#999]">
            <button type="button" aria-label="隐藏背景" className="flex w-[23px] items-center justify-center border-r border-[#999] shadow-[inset_3px_3px_0_-2px_#999]"><Eye /></button>
            <button type="button" className="flex flex-1 items-center pr-4 pl-[3px]">
              <span className="h-[14px] w-8 border border-black bg-white" />
              <span className="ml-2.5 flex-1 text-left font-semibold italic">背景</span>
              <Svg w={10} h={11}>
                <path d="M2.500 5V3.500q0-2.500 2.500-2.500t2.500 2.500V5" stroke="#222" strokeWidth="1.200" />
                <rect x=".5" y="4.500" width="9" height="6" fill="#eee" stroke="#222" />
                <path d="M5 6.500v2" stroke="#222" />
              </Svg>
            </button>
          </li>
        </ul>
        <div className="flex w-[15px] justify-center bg-[#f0f0f0] pt-[7px]">
          <Svg w={9} h={6}><path d="M.5 5l4-4 4 4" stroke="#b5b5b5" strokeWidth="1.500" /></Svg>
        </div>
      </div>
    </section>
  );
}

export default function App() {
  return (
    <div className={`flex h-screen flex-col overflow-hidden border-x border-t border-[#4f7a73] bg-[#dde3e2] ${FONT}`}>
      <MenuBar />
      <div className="mr-[3px] ml-1 flex min-h-0 flex-1 flex-col border-x border-[#444]">
        <OptionsBar />
        <div className="flex min-h-0 flex-1">
          <Toolbox />
          <Workspace />
          <div className="flex flex-col border-l border-black bg-[#646464]">
            <div className="flex h-3 shrink-0 items-center justify-between border-b border-black bg-linear-to-b from-[#666] to-[#3c3c3c] pr-[3px] pl-[25px]">
              <Svg w={8} h={6}><path d="M4 0v6L0 3zM8 0v6L4 3z" fill="#ddd" /></Svg>
              <Svg w={8} h={6}><path d="M0 0l3.500 3L0 6zM4 0l3.500 3L4 6z" fill="#ddd" /></Svg>
            </div>
            <div className="flex min-h-0 flex-1">
              <Dock />
              <div className="flex w-[245px] flex-col border-l border-[#555]">
                <ColorPanel />
                <MaskPanel />
                <LayersPanel />
              </div>
            </div>
          </div>
        </div>
      </div>
    </div>
  );
}
